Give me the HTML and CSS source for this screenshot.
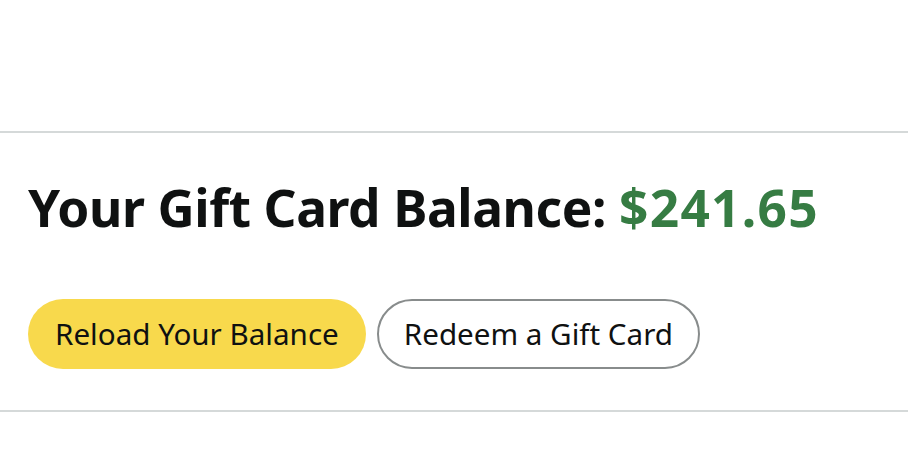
FILE: index.html
```html
<!DOCTYPE html>
<html>
<head>
<meta charset="utf-8">
<link rel="stylesheet" href="styles.css">
</head>
<body>
<div class="spacer"></div>
<section class="balance">
  <h1 class="title">Your Gift Card Balance: <span class="amount">$241.65</span></h1>
  <div class="actions">
    <button class="btn btn-primary">Reload Your Balance</button>
    <button class="btn btn-secondary">Redeem a Gift Card</button>
  </div>
</section>
</body>
</html>
```

FILE: styles.css
```css
* { box-sizing: border-box; }
body {
  margin: 0;
  background: #fff;
  font-family: "Noto Sans", "Open Sans", sans-serif;
  color: #0f1111;
}
.spacer { height: 131px; }
.balance {
  border-top: 2px solid #d5d9d9;
  border-bottom: 2px solid #d5d9d9;
  padding: 0 28px;
  height: 281px;
}
.title {
  margin: 44px 0 0;
  font-size: 51.4px;
  font-weight: 700;
  line-height: 60px;
  letter-spacing: -0.4px;
  white-space: nowrap;
}
.amount {
  color: #367c43;
  letter-spacing: 1.3px;
}
.actions {
  display: flex;
  gap: 11px;
  margin-top: 62px;
}
.btn {
  height: 70px;
  border-radius: 35px;
  font-family: inherit;
  font-size: 29.6px;
  color: #0f1111;
  padding: 0 27px;
  line-height: 1;
}
.btn-primary {
  background: #f8d94c;
  border: none;
}
.btn-secondary {
  background: #fff;
  border: 2px solid #888c8c;
  padding: 0 25px;
}
```
